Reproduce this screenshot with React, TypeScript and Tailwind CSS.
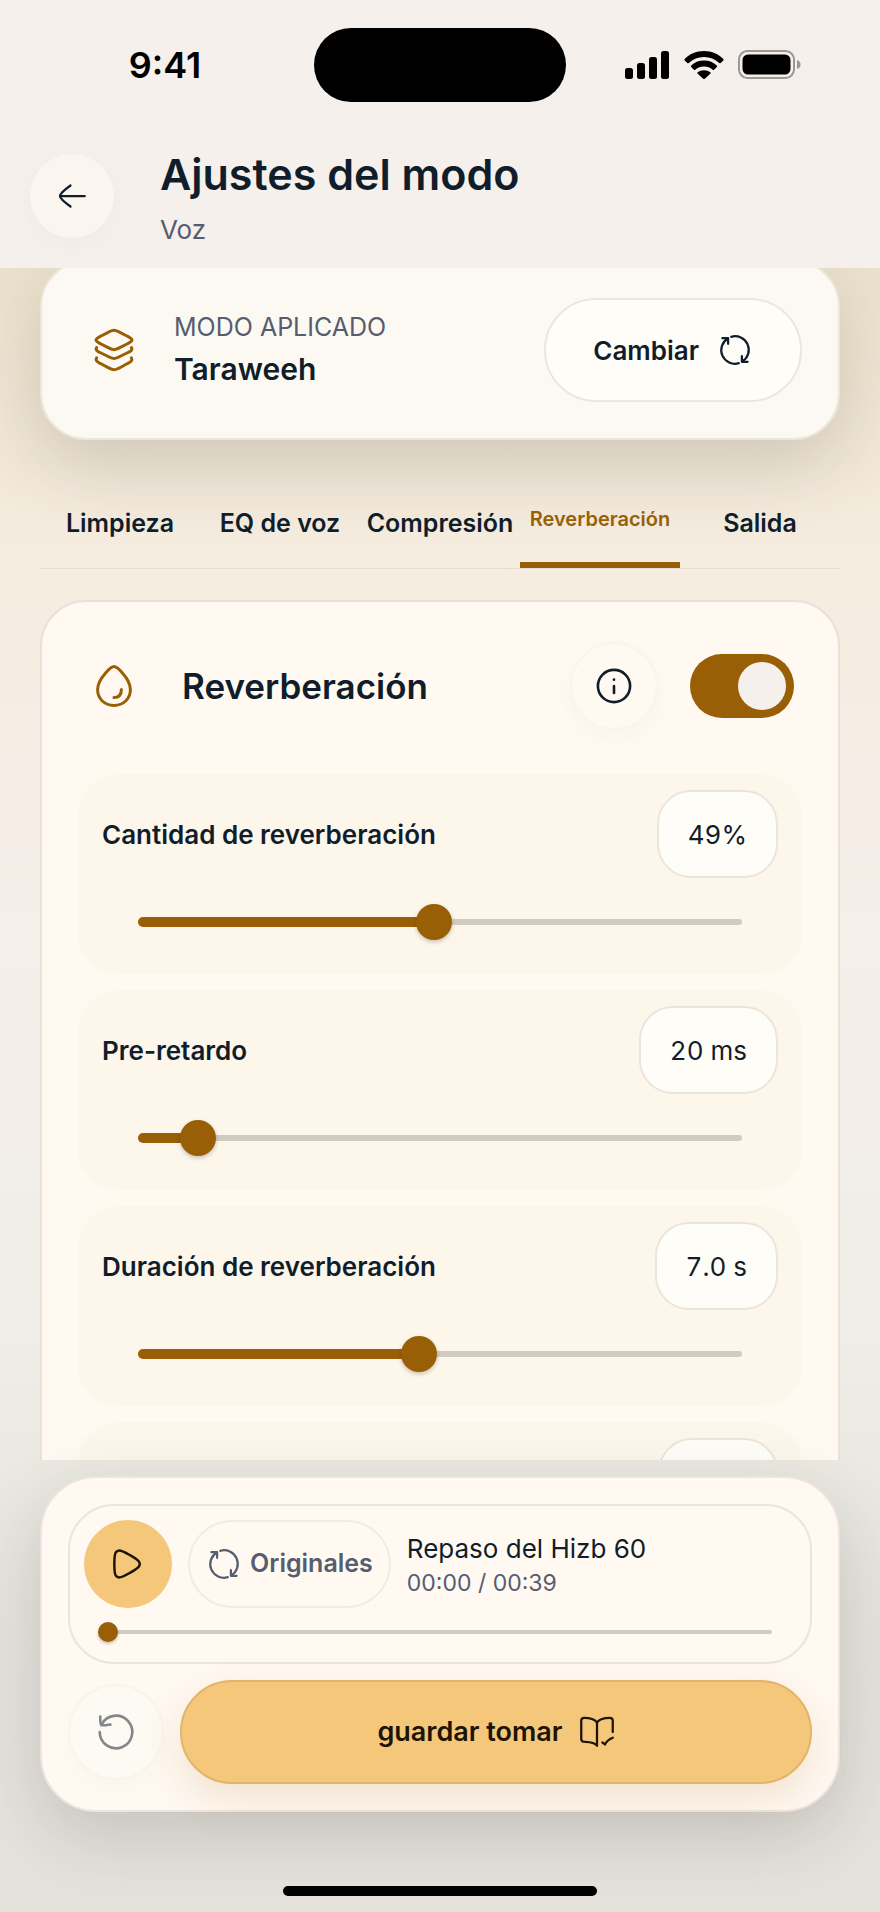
import { useState } from 'react';
import type { ReactNode } from 'react';

const tabs = ['Limpieza', 'EQ de voz', 'Compresión', 'Reverberación', 'Salida'];

const params = [
  { id: 'amount', label: 'Cantidad de reverberación', value: 490, text: '49%' },
  { id: 'predelay', label: 'Pre-retardo', value: 100, text: '20 ms' },
  { id: 'length', label: 'Duración de reverberación', value: 466, text: '7.0 s' },
  { id: 'extra', label: '', value: 500, text: '' },
];

function Icon({ className, children }: { className: string; children: ReactNode }) {
  return (
    <svg
      viewBox="0 0 24 24"
      className={className}
      fill="none"
      stroke="currentColor"
      strokeWidth="1.5"
      strokeLinecap="round"
      strokeLinejoin="round"
      aria-hidden="true"
    >
      {children}
    </svg>
  );
}

function SyncIcon({ className }: { className: string }) {
  return (
    <Icon className={className}>
      <path d="M9.500 3.200A9.100 9.100 0 0 1 16.800 19.700" />
      <path d="M20.400 19.900H16.600V16.100" />
      <path d="M14.500 20.800A9.100 9.100 0 0 1 7.200 4.300" />
      <path d="M3.600 4.100H7.400V7.900" />
    </Icon>
  );
}

function StatusBar() {
  return (
    <div className="grid h-[130px] grid-cols-[1fr_252px_1fr] items-center text-black">
      <span className="justify-self-center pl-4 text-[36px] font-semibold leading-none">9:41</span>
      <div className="h-[74px] rounded-full bg-black" />
      <div className="flex items-center justify-center gap-[14px] pr-5">
        <svg viewBox="0 0 45 28" className="h-[28px] w-[45px]" aria-hidden="true">
          <rect x="0" y="17" width="8" height="11" rx="2.5" />
          <rect x="12" y="12" width="8" height="16" rx="2.5" />
          <rect x="24" y="6" width="8" height="22" rx="2.5" />
          <rect x="36" y="0" width="8" height="28" rx="2.5" />
        </svg>
        <svg viewBox="0 0 40 28" className="h-[28px] w-[40px]" aria-hidden="true">
          <path d="M20 0C28 0 34.700 3.100 39.300 7.900Q40 8.700 39.300 9.500L36.700 12Q36 12.600 35.200 12C31 8 26 6 20 6S9 8 4.800 12Q4 12.600 3.300 12L.7 9.500Q0 8.700 .7 7.900C5.300 3.100 12 0 20 0Z" />
          <path d="M20 9.600C25.300 9.600 29.800 11.600 32.800 14.500Q33.500 15.300 32.800 16.100L30.100 18.700Q29.400 19.300 28.600 18.700C26.300 16.700 23.400 15.500 20 15.500S13.700 16.700 11.400 18.700Q10.600 19.300 9.900 18.700L7.200 16.100Q6.500 15.300 7.200 14.500C10.200 11.600 14.700 9.600 20 9.600Z" />
          <path d="M20 19.200C22.600 19.200 24.700 20 26.300 21.300Q27 22.100 26.300 22.800L20.800 27.700Q20 28.300 19.200 27.700L13.700 22.800Q13 22.100 13.700 21.300C15.300 20 17.400 19.200 20 19.200Z" />
        </svg>
        <svg viewBox="0 0 63 30" className="h-[30px] w-[63px]" aria-hidden="true">
          <rect x="1" y="1" width="55" height="27" rx="8.500" fill="none" stroke="#9a9794" strokeWidth="2" />
          <rect x="4.500" y="4.500" width="48" height="20" rx="5.500" />
          <path d="M59 10Q62.500 11 62.500 14.500T59 19Z" fill="#9a9794" />
        </svg>
      </div>
    </div>
  );
}

type SliderProps = {
  id: string;
  label: string;
  value: number;
  onChange: (value: number) => void;
  small?: boolean;
};

function Slider({ id, label, value, onChange, small }: SliderProps) {
  return (
    <div className="grid items-center">
      <div
        className={
          small
            ? 'col-start-1 row-start-1 h-1 rounded-full bg-[#d1ccc5]'
            : 'col-start-1 row-start-1 h-[6px] rounded-full bg-[#d1cbc0]'
        }
      />
      <div
        className={
          small
            ? 'col-start-1 row-start-1 h-1 rounded-full bg-[#985f06]'
            : 'col-start-1 row-start-1 h-[10px] rounded-full bg-[#985f06]'
        }
        style={{ width: `${value / 10}%` }}
      />
      <input
        id={id}
        type="range"
        min={0}
        max={1000}
        value={value}
        aria-label={label}
        onChange={(e) => onChange(Number(e.target.value))}
        className={
          small
            ? 'col-start-1 row-start-1 -mx-[10px] h-12 appearance-none bg-transparent [&::-webkit-slider-thumb]:size-5 [&::-webkit-slider-thumb]:appearance-none [&::-webkit-slider-thumb]:rounded-full [&::-webkit-slider-thumb]:bg-[#985f06] [&::-webkit-slider-thumb]:shadow-[0_2px_3px_rgba(60,40,10,0.25)]'
            : 'col-start-1 row-start-1 -mx-[18px] h-[88px] appearance-none bg-transparent [&::-webkit-slider-thumb]:size-9 [&::-webkit-slider-thumb]:appearance-none [&::-webkit-slider-thumb]:rounded-full [&::-webkit-slider-thumb]:bg-[#985f06] [&::-webkit-slider-thumb]:shadow-[0_2px_4px_rgba(60,40,10,0.25)]'
        }
      />
    </div>
  );
}

function ParamRow({ id, label, value, text }: { id: string; label: string; value: number; text: string }) {
  const [current, setCurrent] = useState(value);

  return (
    <div className="rounded-[40px] bg-[#fdf6eb] px-6 pb-2 pt-4">
      <div className="flex h-[88px] items-center justify-between">
        <label htmlFor={id} className="text-[26px] font-semibold">
          {label}
        </label>
        <output
          htmlFor={id}
          className="flex h-full min-w-[120px] items-center justify-center rounded-[34px] border-2 border-[#ebe6dc] bg-[#fffdf7] px-[29px] text-[26px] tabular-nums"
        >
          {text}
        </output>
      </div>
      <div className="px-9">
        <Slider id={id} label={label} value={current} onChange={setCurrent} />
      </div>
    </div>
  );
}

export default function App() {
  const [active, setActive] = useState('Reverberación');
  const [enabled, setEnabled] = useState(true);
  const [position, setPosition] = useState(0);

  return (
    <div className="flex h-screen flex-col bg-[linear-gradient(to_bottom,#ece1cd_14%,#f5ede0_30%,#f5eeea_50%,#efede7_70%,#e6e3dc_85%,#e5e2db_100%)] font-['Inter',sans-serif] text-[#101d2b]">
      <header className="h-[268px] shrink-0 bg-[#f5f0eb]">
        <StatusBar />
        <div className="flex items-start px-[30px]">
          <button
            type="button"
            aria-label="Volver"
            className="mt-6 flex size-[84px] items-center justify-center rounded-full bg-[#faf6ef] shadow-[0_6px_24px_rgba(60,60,60,0.03)]"
          >
            <Icon className="size-9">
              <path d="M4 12H20.500" />
              <path d="M11 5C11 5 4 10 4 12S11 19 11 19" />
            </Icon>
          </button>
          <div className="ml-[46px] mt-4">
            <h1 className="text-[43px] font-semibold leading-[56px]">Ajustes del modo</h1>
            <p className="text-[26px] leading-[56px] text-[#575c6e]">Voz</p>
          </div>
        </div>
      </header>

      <main className="min-h-0 flex-1 overflow-y-auto px-10 [scrollbar-width:none]">
        <section className="-mt-2 flex h-[180px] items-center rounded-[46px] border-2 border-[#ece6da] bg-[#fcf9f2] pl-12 pr-9 shadow-[0_24px_70px_rgba(70,65,50,0.2)]">
          <Icon className="size-12 text-[#985f06]">
            <path d="M8.600 3.400C10.300 2.500 11.100 2.100 12 2.100S13.700 2.500 15.400 3.400L18.500 5C20.200 5.900 21 6.300 21 7S20.200 8.100 18.500 9L15.400 10.600C13.700 11.500 12.900 11.900 12 11.900S10.300 11.500 8.600 10.600L5.500 9C3.800 8.100 3 7.700 3 7S3.800 5.900 5.500 5Z" />
            <path d="M20.700 10.800C21.400 11.900 20.500 12.600 18.500 13.500L15.400 15C13.700 15.900 12.900 16.300 12 16.300S10.300 15.900 8.600 15L5.500 13.500C3.500 12.600 2.600 11.900 3.300 10.800" />
            <path d="M20.700 15.900C21.400 17.200 20.500 18 18.500 18.900L15.400 20.600C13.700 21.500 12.900 21.900 12 21.900S10.300 21.500 8.600 20.600L5.500 18.900C3.500 18 2.600 17.200 3.300 15.900" />
          </Icon>
          <div className="ml-9 flex-1 pb-1">
            <p className="text-[25px] leading-[42px] text-[#575c6e]">MODO APLICADO</p>
            <p className="text-[30px] font-semibold leading-[42px]">Taraweeh</p>
          </div>
          <button
            type="button"
            className="flex h-[104px] items-center gap-[18px] rounded-full border-2 border-[#eae7e1] bg-[#fffdf8] px-[47px] text-[26px] font-semibold"
          >
            Cambiar
            <SyncIcon className="size-9" />
          </button>
        </section>

        <div role="tablist" className="mt-10 grid grid-cols-5 shadow-[0_1px_0_#e4ddd2]">
          {tabs.map((tab) => (
            <button
              key={tab}
              type="button"
              role="tab"
              aria-selected={tab === active}
              onClick={() => setActive(tab)}
              className={
                tab === active
                  ? 'h-[88px] border-b-[6px] border-[#985f06] pb-1 text-[20px] font-semibold text-[#985f06]'
                  : 'h-[88px] whitespace-nowrap text-[25px] font-semibold'
              }
            >
              {tab}
            </button>
          ))}
        </div>

        <section className="mt-8 rounded-[46px] border-2 border-[#e8e2d8] bg-[#fff9f1] px-9 pb-9 pt-10">
          <div className="flex items-center pl-3 pr-2">
            <Icon className="size-12 text-[#985f06]">
              <path d="M12 2.300C13.300 2.300 14.400 3.400 16.300 5.600C18.700 8.300 20.200 11.200 20.200 13.800C20.200 18.500 16.700 21.700 12 21.700S3.800 18.500 3.800 13.800C3.800 11.200 5.300 8.300 7.700 5.600C9.600 3.400 10.700 2.300 12 2.300Z" />
              <path d="M15.700 13.700C15.700 16.200 14.300 17.700 12 17.800" />
            </Icon>
            <h2 className="ml-11 flex-1 text-[35px] font-semibold">Reverberación</h2>
            <button
              type="button"
              aria-label="Información"
              className="flex size-[88px] items-center justify-center rounded-full border-2 border-[#f9f4ed] shadow-[0_8px_20px_rgba(80,60,40,0.03)]"
            >
              <Icon className="size-[42px]">
                <circle cx="12" cy="12" r="9.200" />
                <path d="M12 16V12" />
                <path d="M12 8.400V8.300" />
              </Icon>
            </button>
            <label className="ml-8 flex h-16 w-[104px] cursor-pointer items-center rounded-full bg-[#bdb6aa] px-2 has-checked:justify-end has-checked:bg-[#985f06]">
              <input
                type="checkbox"
                role="switch"
                aria-label="Reverberación"
                checked={enabled}
                onChange={(e) => setEnabled(e.target.checked)}
                className="size-12 appearance-none rounded-full bg-[#f5f0eb]"
              />
            </label>
          </div>

          <div className="mt-11 flex flex-col gap-4">
            {params.map((p) => (
              <ParamRow key={p.id} {...p} />
            ))}
          </div>
        </section>
      </main>

      <footer className="relative mx-10 mb-[74px] mt-4 shrink-0 rounded-[56px] border-2 border-[#ece5dd] bg-[#fff9f2] p-[26px] shadow-[0_24px_70px_rgba(70,70,80,0.2)]">
        <div className="rounded-[46px] border-2 border-[#eae5de] px-[14px] pb-[6px] pt-[14px]">
          <div className="flex items-center gap-4">
            <button
              type="button"
              aria-label="Reproducir"
              className="flex size-[88px] items-center justify-center rounded-full bg-[#f4c77b] text-[#1e1406]"
            >
              <Icon className="size-10">
                <path d="M18.900 12.800C18.500 14.300 16.700 15.300 13 17.400C9.500 19.400 7.700 20.400 6.300 20C5.700 19.900 5.200 19.500 4.800 19.100C3.800 18.100 3.800 16.100 3.800 12S3.800 5.900 4.800 4.900C5.200 4.500 5.700 4.100 6.300 4C7.700 3.600 9.500 4.600 13 6.600C16.700 8.700 18.500 9.700 18.900 11.200C19.100 11.700 19.100 12.300 18.900 12.800Z" />
              </Icon>
            </button>
            <button
              type="button"
              className="flex h-[88px] items-center gap-2 rounded-full border-2 border-[#f0ebe4] px-4 text-[25px] font-semibold text-[#575c6e]"
            >
              <SyncIcon className="size-9" />
              Originales
            </button>
            <div className="pt-[2px]">
              <p className="text-[26px] leading-9">Repaso del Hizb 60</p>
              <p className="text-[23px] leading-8 text-[#575c6e]">00:00 / 00:39</p>
            </div>
          </div>
          <div className="px-6">
            <Slider id="position" label="Posición" value={position} onChange={setPosition} small />
          </div>
        </div>

        <div className="mt-4 flex items-center gap-4">
          <button
            type="button"
            aria-label="Restablecer"
            className="flex size-24 items-center justify-center rounded-full border-2 border-[#f9f5ed] bg-[#fcfaf3] text-[#83868a] shadow-[0_8px_20px_rgba(80,60,40,0.02)]"
          >
            <Icon className="size-[42px]">
              <path d="M2.700 12A9.300 9.300 0 1 0 3.700 7.800" />
              <path d="M3 3.200C3 5 2.900 7.800 3.700 8.100S7.800 7.900 8.800 7.800" />
            </Icon>
          </button>
          <button
            type="button"
            className="flex h-[104px] flex-1 items-center justify-center gap-4 rounded-full border-2 border-[#e1b469] bg-[#f4c77b] text-[27px] font-semibold text-[#1e1406] shadow-[0_16px_40px_rgba(190,130,60,0.18)]"
          >
            guardar tomar
            <Icon className="size-9">
              <path d="M12 21V5.500" />
              <path d="M12 21C10 18.500 5.500 18.700 3 18.500Q1.500 18.300 1.500 16.500V4.500Q1.500 2.500 3.500 2.500C7 2.500 10 3 12 5.500C14 3 17 2.500 20.500 2.500Q22.500 2.500 22.500 4.500V12" />
              <path d="M15.600 19L17.300 20.300C18.300 18.300 20 16.800 22.500 15.800" />
            </Icon>
          </button>
        </div>
      </footer>

      <div className="mx-auto mb-4 h-[10px] w-[314px] shrink-0 rounded-full bg-black" />
    </div>
  );
}
